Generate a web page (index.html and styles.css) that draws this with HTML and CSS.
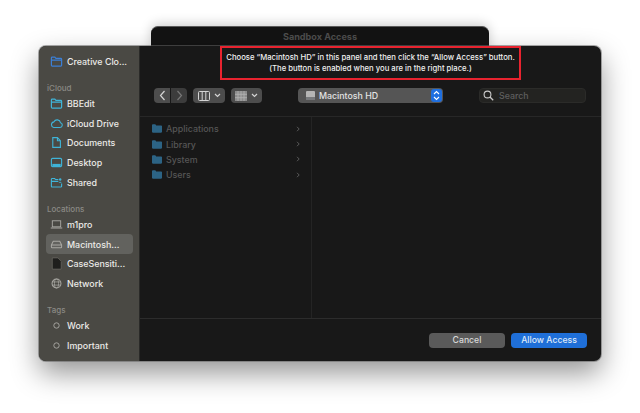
FILE: index.html
```html
<!DOCTYPE html>
<html>
<head>
	<title>Sandbox Access</title>
	<link rel="stylesheet" href="styles.css">
</head>
<body>
	<div class="backwin">Sandbox Access</div>

	<div class="panel">
		<div class="sidebar">
			<div class="row">
				<svg class="ico" viewBox="0 0 14 14"><path d="M1.5 11V3.2q0-.9.9-.9h2.800l1.200 1.300h5.200q.9 0 .9.9V11q0 .9-.9.9H2.400q-.9 0-.9-.9zM1.500 5.600h11" fill="none" stroke="#3b7fd6" stroke-width="1.300"/></svg>
				<span>Creative Clo...</span>
			</div>
			<div class="head first">iCloud</div>
			<div class="row">
				<svg class="ico" viewBox="0 0 14 14"><path d="M1.500 11V3.200q0-.9.9-.9h2.800l1.200 1.300h5.200q.9 0 .9.9V11q0 .9-.9.9H2.400q-.9 0-.9-.9zM1.500 5.600h11" fill="none" stroke="#3fb4d8" stroke-width="1.300"/></svg>
				<span>BBEdit</span>
			</div>
			<div class="row">
				<svg class="ico" viewBox="0 0 14 14"><path d="M4 11.300h6.800a2.600 2.600 0 0 0 .5-5.100 3.700 3.700 0 0 0-7-1A3.100 3.100 0 0 0 4 11.300z" fill="none" stroke="#3fb4d8" stroke-width="1.200"/></svg>
				<span>iCloud Drive</span>
			</div>
			<div class="row">
				<svg class="ico" viewBox="0 0 14 14"><path d="M3 1.800h5l3.200 3.300v7.100H3zM8 1.800v3.300h3.200" fill="none" stroke="#3fb4d8" stroke-width="1.200"/></svg>
				<span>Documents</span>
			</div>
			<div class="row">
				<svg class="ico" viewBox="0 0 14 14"><rect x="1.500" y="2.500" width="11" height="9" rx="1.300" fill="none" stroke="#3fb4d8" stroke-width="1.200"/><rect x="2.500" y="8.500" width="9" height="2.400" fill="#3fb4d8"/></svg>
				<span>Desktop</span>
			</div>
			<div class="row">
				<svg class="ico" viewBox="0 0 14 14"><path d="M1.500 11V3.600q0-.9.9-.9h2.600l1 1.100h3M1.500 5.800h7.500M12.500 8v3q0 .9-.9.9H2.400q-.9 0-.9-.9" fill="none" stroke="#3fb4d8" stroke-width="1.200"/><circle cx="11" cy="3.800" r="1.300" fill="#3fb4d8"/><path d="M9.300 7.200q1.700-2 3.400 0z" fill="#3fb4d8"/></svg>
				<span>Shared</span>
			</div>
			<div class="head">Locations</div>
			<div class="row">
				<svg class="ico" viewBox="0 0 14 14"><rect x="2.500" y="3" width="9" height="6.500" fill="none" stroke="#a9a8a3"/><path d="M.8 10.800h12.400" stroke="#a9a8a3" stroke-width="1.200"/></svg>
				<span>m1pro</span>
			</div>
			<div class="row active">
				<svg class="ico" viewBox="0 0 14 14"><path d="M1.500 7.500 3.500 3.500h7l2 4v2.200q0 .8-.8.8H2.300q-.8 0-.8-.8zM1.500 7.500h11" fill="none" stroke="#a9a8a3" stroke-width="1.100"/></svg>
				<span>Macintosh...</span>
			</div>
			<div class="row">
				<svg class="ico" viewBox="0 0 14 14"><path d="M2.500 1h6l3.500 3.600V13H2.500z" fill="#1f1f1d" stroke="#77766f" stroke-width=".6"/></svg>
				<span>CaseSensiti...</span>
			</div>
			<div class="row">
				<svg class="ico" viewBox="0 0 14 14"><circle cx="7" cy="7" r="4.800" fill="none" stroke="#a9a8a3" stroke-width="1.100"/><ellipse cx="7" cy="7" rx="2.200" ry="4.800" fill="none" stroke="#a9a8a3" stroke-width=".8"/><path d="M2.500 5.300h9M2.500 8.700h9" stroke="#a9a8a3" stroke-width=".8"/></svg>
				<span>Network</span>
			</div>
			<div class="head">Tags</div>
			<div class="row">
				<svg class="ico" viewBox="0 0 14 14"><circle cx="7" cy="7" r="2.900" fill="none" stroke="#a9a8a3" stroke-width="1"/></svg>
				<span>Work</span>
			</div>
			<div class="row">
				<svg class="ico" viewBox="0 0 14 14"><circle cx="7" cy="7" r="2.900" fill="none" stroke="#a9a8a3" stroke-width="1"/></svg>
				<span>Important</span>
			</div>
		</div>

		<div class="main">
			<div class="message">
				Choose “Macintosh HD” in this panel and then click the “Allow Access” button.<br>
				(The button is enabled when you are in the right place.)
			</div>

			<div class="toolbar">
				<div class="navgroup">
					<div class="tool back">
						<svg width="7" height="11" viewBox="0 0 7 11"><path d="M5.500 1 1.500 5.500l4 4.500" fill="none" stroke="#d4d4d4" stroke-width="1.200"/></svg>
					</div>
					<div class="tool forward">
						<svg width="7" height="11" viewBox="0 0 7 11"><path d="M1.500 1l4 4.500-4 4.500" fill="none" stroke="#777" stroke-width="1.200"/></svg>
					</div>
				</div>
				<div class="tool viewbtn">
					<svg width="12" height="10" viewBox="0 0 12 10"><rect x=".5" y=".5" width="11" height="9" rx="1" fill="none" stroke="#d4d4d4"/><path d="M4.200 1v8M7.800 1v8" stroke="#d4d4d4"/></svg>
					<svg width="7" height="5" viewBox="0 0 7 5"><path d="M1 1l2.500 2.500L6 1" fill="none" stroke="#d4d4d4" stroke-width="1.200"/></svg>
				</div>
				<div class="tool viewbtn group">
					<svg width="12" height="10" viewBox="0 0 12 10"><rect width="12" height="10" fill="#8c8c8c"/><path d="M0 3.300h12M0 6.700h12M3 0v10M6 0v10M9 0v10" stroke="#b4b4b4" stroke-width=".8"/></svg>
					<svg width="7" height="5" viewBox="0 0 7 5"><path d="M1 1l2.500 2.500L6 1" fill="none" stroke="#d4d4d4" stroke-width="1.200"/></svg>
				</div>
				<div class="popup">
					<svg width="11" height="11" viewBox="0 0 11 11"><rect x="1" y="1" width="9" height="9" rx="1" fill="#b5b5b5"/><rect x="1" y="7" width="9" height="3" fill="#77797c"/></svg>
					<span class="popuplabel">Macintosh HD</span>
					<div class="stepper">
						<svg width="7" height="11" viewBox="0 0 7 11"><path d="M1 4l2.500-2.500L6 4M1 7l2.500 2.500L6 7" fill="none" stroke="#fff" stroke-width="1.100"/></svg>
					</div>
				</div>
				<div class="search">
					<svg width="11" height="11" viewBox="0 0 11 11"><circle cx="4.500" cy="4.500" r="3.400" fill="none" stroke="#c9c9c9" stroke-width="1.100"/><path d="M7 7l3.200 3.200" stroke="#c9c9c9" stroke-width="1.300"/></svg>
					<span>Search</span>
				</div>
			</div>

			<div class="browser">
				<div class="column">
					<div class="file">
						<svg class="folder" viewBox="0 0 12 10"><path d="M0 1q0-1 1-1h3l1 1.300h6q1 0 1 1V9q0 1-1 1H1q-1 0-1-1z" fill="#2c6384"/></svg>
						<span>Applications</span>
						<svg class="chev" viewBox="0 0 4 6"><path d="M1 .8 3.200 3 1 5.200" fill="none" stroke="#6a6a6a" stroke-width=".8"/></svg>
					</div>
					<div class="file">
						<svg class="folder" viewBox="0 0 12 10"><path d="M0 1q0-1 1-1h3l1 1.300h6q1 0 1 1V9q0 1-1 1H1q-1 0-1-1z" fill="#2c6384"/></svg>
						<span>Library</span>
						<svg class="chev" viewBox="0 0 4 6"><path d="M1 .8 3.200 3 1 5.200" fill="none" stroke="#6a6a6a" stroke-width=".8"/></svg>
					</div>
					<div class="file">
						<svg class="folder" viewBox="0 0 12 10"><path d="M0 1q0-1 1-1h3l1 1.300h6q1 0 1 1V9q0 1-1 1H1q-1 0-1-1z" fill="#2c6384"/></svg>
						<span>System</span>
						<svg class="chev" viewBox="0 0 4 6"><path d="M1 .8 3.200 3 1 5.200" fill="none" stroke="#6a6a6a" stroke-width=".8"/></svg>
					</div>
					<div class="file">
						<svg class="folder" viewBox="0 0 12 10"><path d="M0 1q0-1 1-1h3l1 1.300h6q1 0 1 1V9q0 1-1 1H1q-1 0-1-1z" fill="#2c6384"/></svg>
						<span>Users</span>
						<svg class="chev" viewBox="0 0 4 6"><path d="M1 .8 3.200 3 1 5.200" fill="none" stroke="#6a6a6a" stroke-width=".8"/></svg>
					</div>
				</div>
			</div>

			<div class="footer">
				<div class="btn cancel">Cancel</div>
				<div class="btn allow">Allow Access</div>
			</div>
		</div>
	</div>

	<div class="redbox"></div>
</body>
</html>
```

FILE: styles.css
```css
html, body
{
	margin: 0;
	height: 100%;
}
body
{
	background: #fff;
	font-family: Inter, "Liberation Sans", sans-serif;
	width: 640px;
	height: 413px;
	overflow: hidden;
	position: relative;
}

/* windows */
.backwin
{
	position: absolute;
	left: 151px;
	top: 26px;
	width: 338px;
	height: 40px;
	background: #131313;
	border-top: 1px solid #5a5a5a;
	border-radius: 7px 7px 0 0;
	box-shadow: 0 -2px 12px rgba(0,0,0,0.2);
	box-sizing: border-box;
	text-align: center;
	color: #4e4e4e;
	font-size: 9.1px;
	font-weight: 700;
	padding-top: 4px;
}
.panel
{
	position: absolute;
	left: 39px;
	top: 46px;
	width: 562px;
	height: 315px;
	display: flex;
	border-radius: 7px;
	overflow: hidden;
	background: #181818;
	box-shadow: 0 0 0 1px rgba(100,100,100,0.55), 0 12px 28px rgba(0,0,0,0.42);
}
.redbox
{
	position: absolute;
	left: 220px;
	top: 46px;
	width: 301px;
	height: 34px;
	box-sizing: border-box;
	border: 2px solid #e8232f;
}

/* sidebar */
.sidebar
{
	width: 101px;
	flex: none;
	box-sizing: border-box;
	background: #4a4944;
	border-right: 1px solid #2a2a28;
	padding: 6px 6px 0 7px;
}
.row
{
	height: 19.7px;
	display: flex;
	align-items: center;
	color: #ecebe8;
	font-size: 8.9px;
	font-weight: 500;
	border-radius: 4px;
	padding-left: 4px;
	gap: 4px;
	white-space: nowrap;
}
.row.active
{
	background: #62625e;
}
.ico
{
	width: 13px;
	height: 13px;
	flex: none;
}
.head
{
	color: #8b8a84;
	font-size: 8px;
	font-weight: 500;
	height: 16px;
	line-height: 20px;
	padding-left: 1px;
	margin-top: 6.4px;
}
.head.first
{
	margin-top: 6px;
}

/* right side */
.main
{
	flex: 1;
	display: flex;
	flex-direction: column;
	min-width: 0;
}
.message
{
	height: 34px;
	box-sizing: border-box;
	padding-top: 7px;
	text-align: center;
	color: #f0f0f0;
	font-size: 7.7px;
	font-weight: 500;
	line-height: 10.5px;
	margin-left: 80px;
	width: 301px;
	white-space: nowrap;
}
.toolbar
{
	height: 37px;
	box-sizing: border-box;
	display: flex;
	align-items: flex-start;
	padding: 8px 15px 0 14px;
	border-bottom: 1px solid #272727;
}
.navgroup
{
	display: flex;
	gap: 1px;
}
.tool
{
	height: 15px;
	background: #4d4d4d;
	display: flex;
	align-items: center;
	justify-content: center;
}
.back
{
	width: 16px;
	border-radius: 4px 0 0 4px;
}
.forward
{
	width: 16px;
	background: #3c3c3c;
	border-radius: 0 4px 4px 0;
}
.viewbtn
{
	width: 32px;
	margin-left: 6px;
	border-radius: 4px;
	gap: 4px;
}
.group
{
	width: 31px;
}
.popup
{
	width: 145px;
	height: 15px;
	margin-left: 36px;
	background: #555;
	border-radius: 4px;
	display: flex;
	align-items: center;
	padding-left: 7px;
	box-sizing: border-box;
	gap: 3px;
	color: #e3e3e3;
	font-size: 8.8px;
	font-weight: 500;
}
.popuplabel
{
	flex: 1;
}
.stepper
{
	width: 11px;
	height: 13px;
	margin-right: 1px;
	background: #1f6fe0;
	border-radius: 3px;
	display: flex;
	align-items: center;
	justify-content: center;
}
.search
{
	width: 107px;
	height: 15px;
	margin-left: 36px;
	background: #232321;
	border: 1px solid #2b2b29;
	border-radius: 4px;
	box-sizing: border-box;
	display: flex;
	align-items: center;
	padding-left: 3px;
	gap: 5px;
	color: #5f5f5f;
	font-size: 8.8px;
	font-weight: 500;
}
.browser
{
	flex: 1;
	display: flex;
	border-bottom: 1px solid #2c2c2c;
}
.column
{
	width: 172px;
	box-sizing: border-box;
	border-right: 1px solid #242424;
	padding-top: 4px;
}
.file
{
	height: 15.4px;
	display: flex;
	align-items: center;
	padding: 0 11px 0 12px;
	gap: 4px;
	color: #565656;
	font-size: 8.9px;
	font-weight: 500;
}
.file span
{
	flex: 1;
}
.folder
{
	width: 10px;
	height: 9px;
}
.chev
{
	width: 4px;
	height: 6px;
}
.footer
{
	height: 42px;
	box-sizing: border-box;
	display: flex;
	justify-content: flex-end;
	gap: 6px;
	padding: 14px 14px 0 0;
}
.btn
{
	width: 76px;
	height: 15px;
	border-radius: 4px;
	text-align: center;
	line-height: 15px;
	font-size: 8.7px;
	font-weight: 500;
}
.cancel
{
	background: #5a5a5a;
	color: #d9d9d9;
}
.allow
{
	background: #1f6fd8;
	color: #dfeaf9;
}
```
